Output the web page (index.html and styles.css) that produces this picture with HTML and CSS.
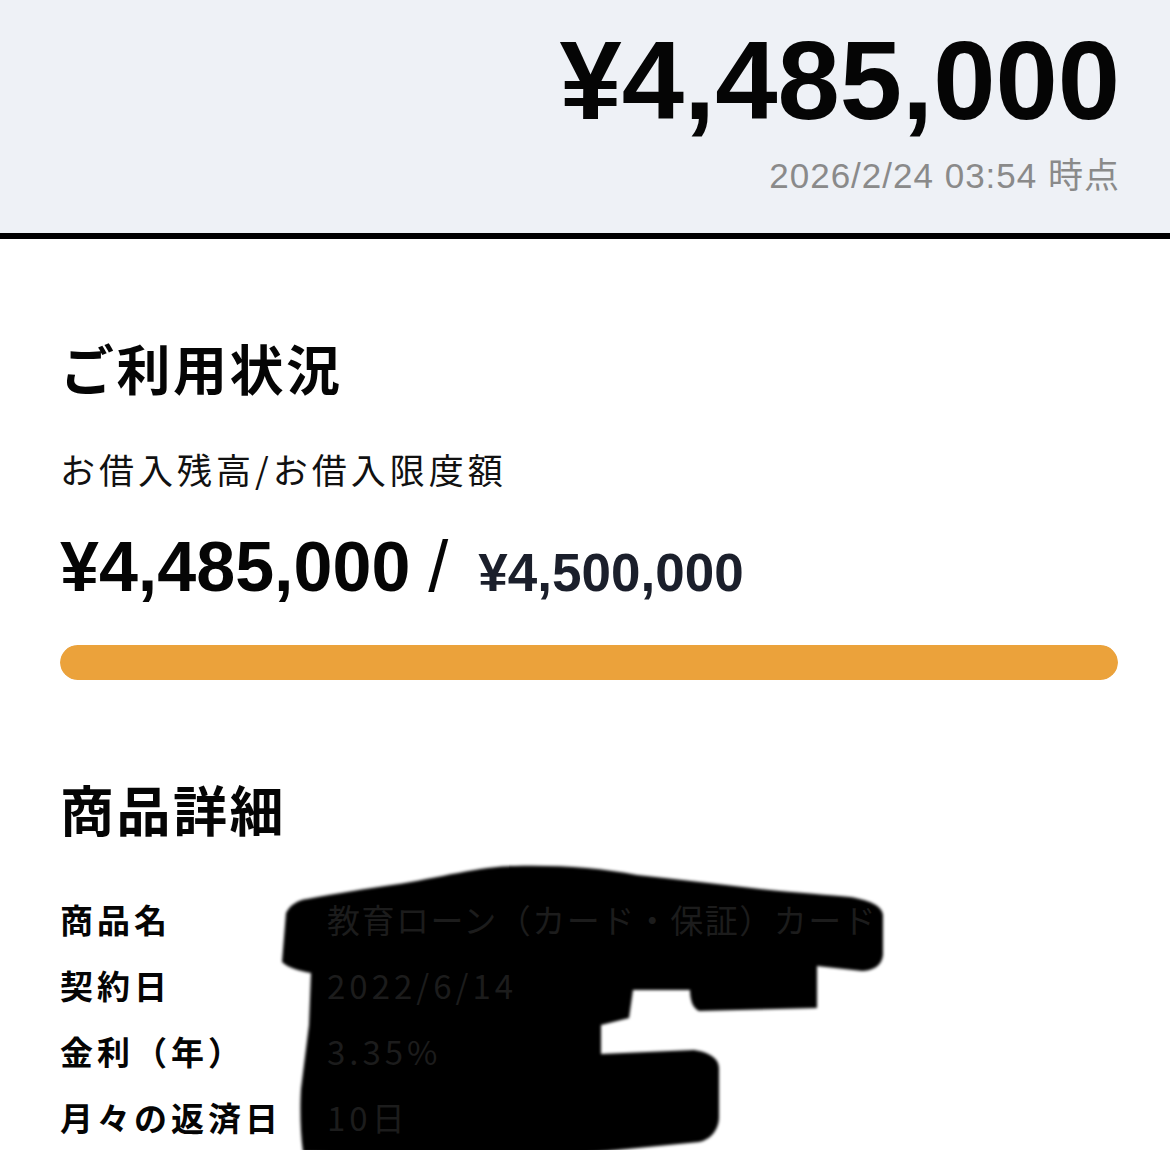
FILE: index.html
```html
<!DOCTYPE html>
<html lang="ja">
<head>
<meta charset="utf-8">
<title>ご利用状況</title>
<link rel="stylesheet" href="styles.css">
</head>
<body>
<header class="summary">
  <div class="summary-amount">¥4,485,000</div>
  <div class="summary-date">2026/2/24 03:54 時点</div>
</header>

<main class="content">
  <section class="usage">
    <h2 class="section-title">ご利用状況</h2>
    <p class="usage-label">お借入残高/お借入限度額</p>
    <div class="usage-amounts"><span class="used">¥4,485,000</span><span class="sep">/</span><span class="limit">¥4,500,000</span></div>
    <div class="bar"><div class="bar-fill" style="width: 99.67%"></div></div>
  </section>

  <section class="details">
    <h2 class="section-title">商品詳細</h2>
    <dl class="detail-list">
      <dt>商品名</dt><dd class="value-long">教育ローン（カード・保証）カード</dd>
      <dt>契約日</dt><dd>2022/6/14</dd>
      <dt>金利（年）</dt><dd>3.35%</dd>
      <dt>月々の返済日</dt><dd>10日</dd>
    </dl>
  </section>
</main>

<svg class="redaction" viewBox="0 0 1170 1150" width="1170" height="1150" aria-hidden="true">
  <defs>
    <filter id="soft" x="-5%" y="-5%" width="110%" height="110%">
      <feGaussianBlur stdDeviation="1.6"/>
    </filter>
  </defs>
  <path filter="url(#soft)" fill="#030303" d="M307 899 C340 893 365 889 392 885 C440 878 480 866 515 866 C560 865 600 868 637 875 C680 880 720 884 760 889 C800 893 830 895 850 897 C868 900 882 905 883 915 L883 955 C882 966 872 971 862 971 L817 966 L817 1008 L699 1011 C692 1008 690 998 690 990 L633 990 L629 1018 L601 1025 L601 1054 L694 1050 C708 1052 719 1058 719 1068 L719 1117 C719 1130 710 1140 699 1142 L515 1160 L303 1152 C300 1130 300 1105 301 1089 L309 1025 L311 973 C300 971 288 968 282 962 L286 913 C290 905 298 900 307 899 Z"/>
</svg>
</body>
</html>
```

FILE: styles.css
```css
html, body {
  margin: 0;
  padding: 0;
}

body {
  position: relative;
  background: #ffffff;
  color: #000000;
  font-family: "Liberation Sans", "Noto Sans CJK JP", sans-serif;
  overflow: hidden;
  width: 1170px;
  height: 1150px;
}

.summary {
  background: #eef1f6;
  border-bottom: 6px solid #000000;
  padding: 25px 50px 40px 0;
  display: flex;
  flex-direction: column;
  align-items: flex-end;
  height: 168px;
}

.summary-amount {
  font-family: "Liberation Sans", sans-serif;
  font-weight: 700;
  font-size: 112px;
  line-height: 1;
  color: #050505;
}

.summary-date {
  margin-top: 21px;
  font-family: "Liberation Sans", "Noto Sans CJK JP", sans-serif;
  font-size: 35px;
  line-height: 35px;
  letter-spacing: 1px;
  color: #8a8a8a;
}

.content {
  padding: 102px 52px 0 60px;
}

.section-title {
  margin: 0;
  font-family: "Noto Sans CJK JP", sans-serif;
  font-weight: 700;
  font-size: 54px;
  line-height: 54px;
  letter-spacing: 2.5px;
  color: #050505;
}

.usage-label {
  margin: 56px 0 0;
  font-family: "Noto Sans CJK JP", sans-serif;
  font-weight: 400;
  font-size: 35px;
  line-height: 35px;
  letter-spacing: 4px;
  color: #111111;
}

.usage-amounts {
  margin-top: 44px;
  font-family: "Liberation Sans", sans-serif;
  font-size: 70px;
  line-height: 1;
  white-space: nowrap;
}

.used {
  font-weight: 700;
  color: #050505;
}

.sep {
  font-weight: 400;
  font-size: 72px;
  margin: 0 30px 0 18px;
  color: #050505;
}

.limit {
  font-weight: 700;
  font-size: 53px;
  color: #1b1f2b;
}

.bar {
  margin-top: 43px;
  height: 35px;
  border-radius: 18px;
  background: #f3f3f3;
  overflow: hidden;
}

.bar-fill {
  height: 100%;
  background: #eba23b;
  border-radius: 18px;
  min-width: 100%;
}

.details {
  margin-top: 102px;
}

.detail-list {
  margin: 50px 0 0;
  display: grid;
  grid-template-columns: 267px 1fr;
  grid-auto-rows: 66px;
  font-family: "Noto Sans CJK JP", sans-serif;
  font-size: 33px;
  line-height: 66px;
  letter-spacing: 4px;
}

.detail-list dt {
  font-weight: 700;
  color: #050505;
  white-space: nowrap;
}

.detail-list dd {
  margin: 0;
  position: relative;
  z-index: 2;
  white-space: nowrap;
  font-weight: 400;
  color: #1c1c1c;
}

.detail-list dd.value-long {
  letter-spacing: 1.5px;
}

.redaction {
  position: absolute;
  left: 0;
  top: 0;
  z-index: 1;
  pointer-events: none;
}
```
